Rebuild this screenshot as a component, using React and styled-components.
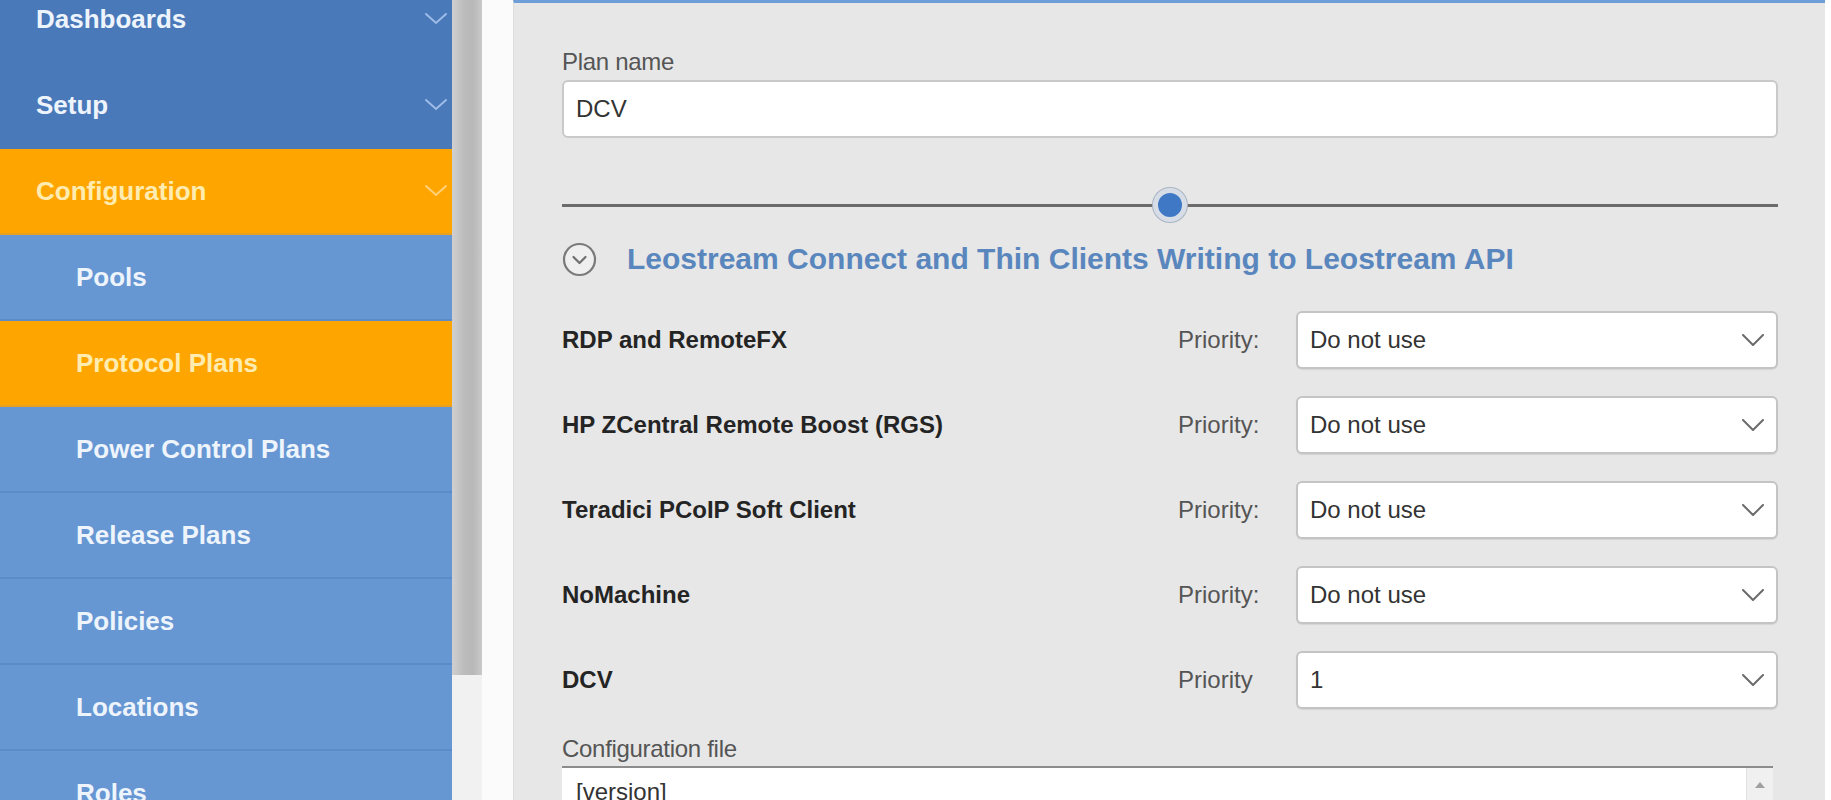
import React from "react";
import styled, { createGlobalStyle } from "styled-components";

const GlobalStyle = createGlobalStyle`
  html, body {
    margin: 0;
    padding: 0;
    background: #ffffff;
    overflow: hidden;
  }
  body {
    font-family: "Liberation Sans", Arial, sans-serif;
  }
`;

const menu = [
  { label: "Dashboards", kind: "top", caret: true },
  { label: "Setup", kind: "top", caret: true },
  { label: "Configuration", kind: "active", caret: true },
  { label: "Pools", kind: "sub" },
  { label: "Protocol Plans", kind: "activeSub" },
  { label: "Power Control Plans", kind: "sub" },
  { label: "Release Plans", kind: "sub" },
  { label: "Policies", kind: "sub" },
  { label: "Locations", kind: "sub" },
  { label: "Roles", kind: "sub" },
];

const protocols = [
  { name: "RDP and RemoteFX", value: "Do not use" },
  { name: "HP ZCentral Remote Boost (RGS)", value: "Do not use" },
  { name: "Teradici PCoIP Soft Client", value: "Do not use" },
  { name: "NoMachine", value: "Do not use" },
  { name: "DCV", value: "1", noColon: true },
];

const bgFor = {
  top: "#4a79b9",
  active: "#ffa500",
  sub: "#6697d3",
  activeSub: "#ffa500",
};

const Page = styled.div`
  display: flex;
  height: 800px;
  overflow: hidden;
`;

const Sidebar = styled.aside`
  width: 452px;
  flex-shrink: 0;
  background: #6697d3;
  overflow: hidden;
`;

const Nav = styled.nav`
  margin-top: -23px;
`;

const NavItem = styled.div`
  height: 84px;
  display: flex;
  align-items: center;
  justify-content: space-between;
  padding-left: ${(p) => (p.$kind === "top" || p.$kind === "active" ? "36px" : "76px")};
  padding-right: 4px;
  background: ${(p) => bgFor[p.$kind]};
  border-bottom: 2px solid
    ${(p) =>
      p.$kind === "top"
        ? "#4a79b9"
        : p.$kind === "sub"
        ? "#5b8bc9"
        : "#e8a020"};
  color: ${(p) => (p.$kind.startsWith("active") ? "#ffecb0" : "#eef4fc")};
  font-size: 26px;
  font-weight: 700;
`;

const Caret = styled.svg`
  width: 24px;
  height: 14px;
  flex-shrink: 0;
`;

const Scrollbar = styled.div`
  width: 30px;
  flex-shrink: 0;
  background: #f1f1f1;
`;

const Thumb = styled.div`
  height: 675px;
  background: linear-gradient(to right, #d0d0d0 0%, #bcbcbc 40%, #b8b8b8 70%, #c9c9c9 100%);
`;

const Gutter = styled.div`
  width: 31px;
  flex-shrink: 0;
  background: #fbfbfb;
`;

const Panel = styled.main`
  width: 1312px;
  flex-shrink: 0;
  box-sizing: border-box;
  background: #e7e7e7;
  border-top: 3px solid #6e9ed7;
  border-left: 1px solid #dcdcdc;
  padding: 45px 47px 0 48px;
`;

const FieldLabel = styled.div`
  font-size: 24px;
  line-height: 28px;
  color: #555555;
  margin-top: ${(p) => p.$top || 0}px;
  margin-bottom: ${(p) => p.$bottom || 4}px;
  letter-spacing: -0.3px;
`;

const TextBox = styled.div`
  height: 58px;
  box-sizing: border-box;
  background: #ffffff;
  border: 2px solid #c9c9c9;
  border-radius: 6px;
  display: flex;
  align-items: center;
  padding-left: 12px;
  font-size: 24px;
  color: #333333;
`;

const Slider = styled.div`
  position: relative;
  height: 36px;
  margin-top: 49px;
  display: flex;
  align-items: center;
`;

const Track = styled.div`
  flex: 1;
  height: 3px;
  background: #6b6b6b;
`;

const Knob = styled.div`
  position: absolute;
  top: 50%;
  width: 24px;
  height: 24px;
  border-radius: 50%;
  background: #3f79c6;
  border: 5px solid #d7dde6;
  box-shadow: 0 0 0 1px #a9b4c2;
  transform: translate(-50%, -50%);
`;

const SectionHead = styled.div`
  height: 40px;
  margin-top: 16px;
  display: flex;
  align-items: center;
  gap: 30px;
`;

const SectionTitle = styled.h2`
  margin: 0;
  font-size: 30px;
  font-weight: 700;
  color: #5a86be;
`;

const Rows = styled.div`
  margin-top: 32px;
  display: flex;
  flex-direction: column;
  gap: 27px;
`;

const Row = styled.div`
  display: grid;
  grid-template-columns: 1fr 118px 482px;
  align-items: center;
  height: 58px;
`;

const ProtoName = styled.div`
  font-size: 24px;
  font-weight: 700;
  color: #242424;
`;

const Priority = styled.div`
  font-size: 24px;
  color: #555555;
`;

const Select = styled.div`
  height: 58px;
  box-sizing: border-box;
  background: #ffffff;
  border: 2px solid #c4c4c4;
  border-radius: 6px;
  box-shadow: 0 1px 1px rgba(0, 0, 0, 0.08);
  display: flex;
  align-items: center;
  justify-content: space-between;
  padding: 0 12px 0 12px;
  font-size: 24px;
  color: #333333;
`;

const TextArea = styled.div`
  height: 60px;
  background: #ffffff;
  border-top: 2px solid #8c8c8c;
  margin-right: 5px;
  display: flex;
  justify-content: space-between;
`;

const AreaText = styled.div`
  padding: 10px 0 0 14px;
  font-size: 24px;
  color: #333333;
`;

const AreaScroll = styled.div`
  width: 26px;
  background: #f0f0f0;
  border-left: 1px solid #e2e2e2;
  display: flex;
  justify-content: center;
  padding-top: 14px;
`;

const ChevronDown = ({ color = "#6b6b6b", w = 22, h = 12, sw = 2 }) => (
  <svg width={w} height={h} viewBox="0 0 22 12" fill="none">
    <path d="M1 1 L11 11 L21 1" stroke={color} strokeWidth={sw} strokeLinecap="round" strokeLinejoin="round" />
  </svg>
);

const CircleToggle = () => (
  <svg width="35" height="35" viewBox="0 0 35 35" fill="none">
    <circle cx="17.5" cy="17.5" r="15.5" stroke="#7a7a7a" strokeWidth="2.2" fill="#efefef" />
    <path d="M11.5 15 L17.5 21 L23.5 15" stroke="#6f6f6f" strokeWidth="2.2" strokeLinecap="round" strokeLinejoin="round" />
  </svg>
);

export default function App() {
  return (
    <>
      <GlobalStyle />
      <Page>
        <Sidebar>
          <Nav>
            {menu.map((m) => (
              <NavItem key={m.label} $kind={m.kind}>
                <span>{m.label}</span>
                {m.caret && (
                  <Caret viewBox="0 0 24 14" fill="none">
                    <path
                      d="M2 2 L12 11 L22 2"
                      stroke={m.kind === "active" ? "#ffd27a" : "#9dbce8"}
                      strokeWidth="2"
                      strokeLinecap="round"
                    />
                  </Caret>
                )}
              </NavItem>
            ))}
          </Nav>
        </Sidebar>
        <Scrollbar>
          <Thumb />
        </Scrollbar>
        <Gutter />
        <Panel>
          <FieldLabel>Plan name</FieldLabel>
          <TextBox>DCV</TextBox>

          <Slider>
            <Track />
            <Knob style={{ left: "50%" }} />
          </Slider>

          <SectionHead>
            <CircleToggle />
            <SectionTitle>Leostream Connect and Thin Clients Writing to Leostream API</SectionTitle>
          </SectionHead>

          <Rows>
            {protocols.map((p) => (
              <Row key={p.name}>
                <ProtoName>{p.name}</ProtoName>
                <Priority>{p.noColon ? "Priority" : "Priority:"}</Priority>
                <Select>
                  <span>{p.value}</span>
                  <ChevronDown />
                </Select>
              </Row>
            ))}
          </Rows>

          <FieldLabel $top={26} $bottom={3}>Configuration file</FieldLabel>
          <TextArea>
            <AreaText>[version]</AreaText>
            <AreaScroll>
              <svg width="10" height="6" viewBox="0 0 10 6">
                <path d="M0 6 L5 0 L10 6 Z" fill="#a0a0a0" />
              </svg>
            </AreaScroll>
          </TextArea>
        </Panel>
      </Page>
    </>
  );
}
